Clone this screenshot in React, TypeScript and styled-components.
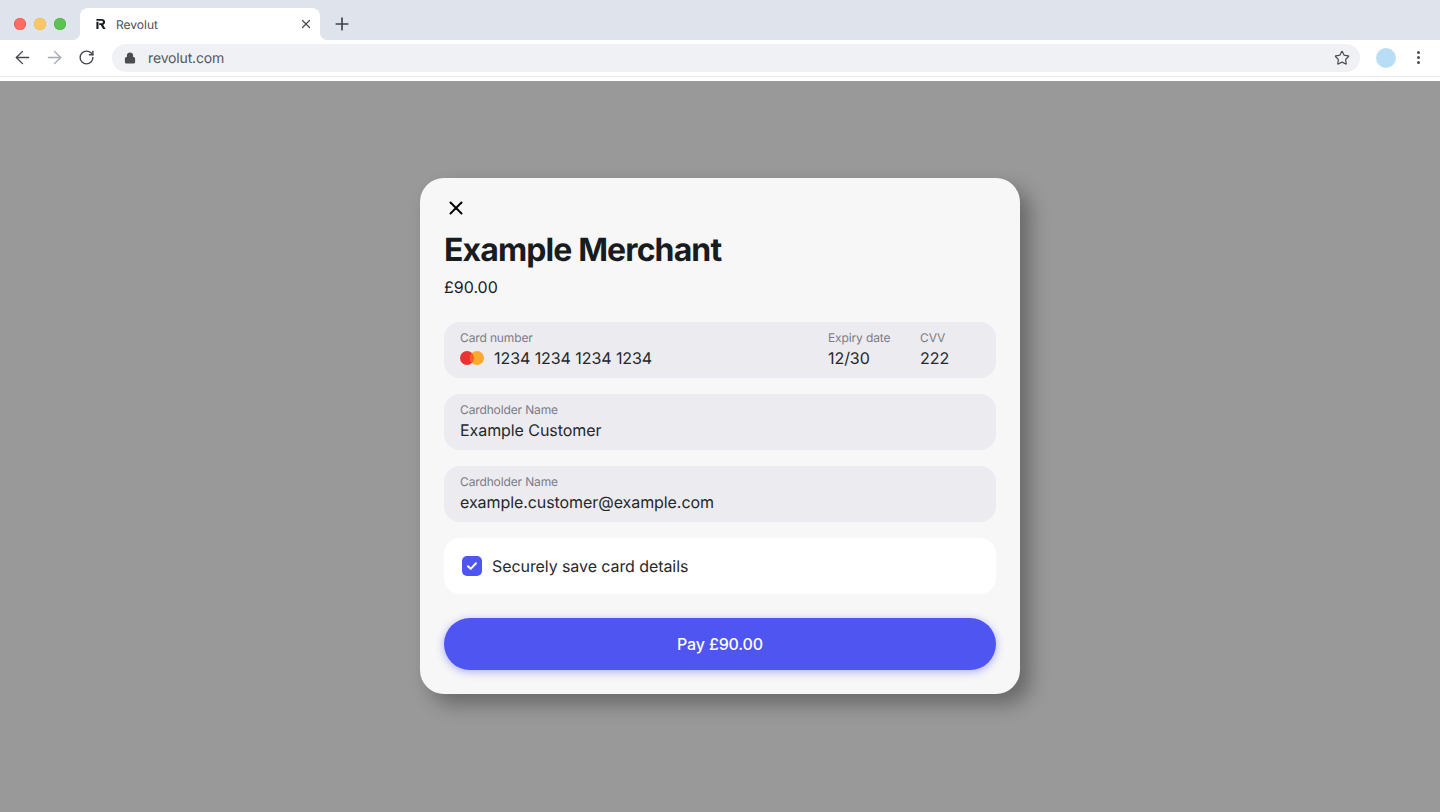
import styled, { createGlobalStyle } from 'styled-components';
import { ArrowLeft, ArrowRight, Lock, Plus, RotateCw, Star, X } from 'lucide-react';

const GlobalStyle = createGlobalStyle`
  html, body {
    margin: 0;
    padding: 0;
    height: 100%;
  }

  body {
    font-family: Inter, "Liberation Sans", sans-serif;
    text-rendering: geometricPrecision;
    background: #999;
    color: #191c1f;
    overflow: hidden;
  }

  * {
    box-sizing: border-box;
  }
`;

const Page = styled.div`
  display: flex;
  flex-direction: column;
  width: 1440px;
  height: 812px;
`;

const TabStrip = styled.div`
  display: flex;
  align-items: flex-end;
  height: 40px;
  padding-left: 14px;
  background: #dfe3ec;
`;

const TrafficLights = styled.div`
  display: flex;
  gap: 8px;
  align-self: flex-start;
  width: 66px;
  margin-top: 18px;
`;

const Light = styled.span<{ $color: string; $edge: string }>`
  width: 12px;
  height: 12px;
  border-radius: 50%;
  background: ${p => p.$color};
  box-shadow: inset 0 0 0 0.5px ${p => p.$edge};
`;

const Tab = styled.div`
  position: relative;
  display: flex;
  align-items: center;
  width: 240px;
  height: 32px;
  padding: 0 7px 0 16px;
  border-radius: 8px 8px 0 0;
  background: #fff;
  font-size: 12px;
  color: #4a4d52;

  &::before,
  &::after {
    content: '';
    position: absolute;
    bottom: 0;
    width: 8px;
    height: 8px;
  }

  &::before {
    left: -8px;
    background: radial-gradient(circle at 0 0, transparent 8px, #fff 8.5px);
  }

  &::after {
    right: -8px;
    background: radial-gradient(circle at 100% 0, transparent 8px, #fff 8.5px);
  }
`;

const TabTitle = styled.span`
  flex: 1;
  margin-left: 10px;
`;

const TabClose = styled.span`
  display: flex;
  color: #4a4d52;
`;

const NewTab = styled.span`
  display: flex;
  align-self: flex-start;
  margin-top: 14px;
  margin-left: 12px;
  color: #3f4347;
`;

const Toolbar = styled.div`
  display: flex;
  align-items: center;
  height: 37px;
  padding: 0 20px 1px 6px;
  background: #fff;
  border-bottom: 1px solid #e8e9ec;
`;

const NavButton = styled.span<{ $dim?: boolean }>`
  display: flex;
  justify-content: center;
  width: 32px;
  color: ${p => (p.$dim ? '#a4a8b0' : '#45484d')};
`;

const AddressBar = styled.div`
  display: flex;
  align-items: center;
  flex: 1;
  height: 28px;
  margin-left: 10px;
  padding: 0 10px 0 12px;
  border-radius: 14px;
  background: #eff1f5;
  font-size: 14px;
  color: #55585d;
`;

const LockIcon = styled.span`
  display: flex;
  margin-right: 12px;
  color: #4a4d52;
`;

const Url = styled.span`
  flex: 1;
  padding-top: 1px;
  letter-spacing: -0.15px;
`;

const StarIcon = styled.span`
  display: flex;
  color: #4a4d52;
`;

const Avatar = styled.span`
  width: 20px;
  height: 20px;
  margin-left: 16px;
  border-radius: 50%;
  background: #b8def5;
`;

const MenuDots = styled.span`
  display: flex;
  flex-direction: column;
  gap: 2px;
  margin-left: 21px;

  i {
    width: 3px;
    height: 3px;
    border-radius: 50%;
    background: #4a4d52;
  }
`;

const ToolbarGap = styled.div`
  height: 4px;
  background: #fff;
`;

const Backdrop = styled.main`
  display: flex;
  justify-content: center;
  align-items: flex-start;
  flex: 1;
  padding-top: 97px;
  background: #999;
`;

const Modal = styled.section`
  display: flex;
  flex-direction: column;
  width: 600px;
  height: 516px;
  padding: 22px 24px 24px;
  border-radius: 24px;
  background: #f7f7f7;
  box-shadow: 10px 10px 20px rgba(0, 0, 0, 0.32);
`;

const CloseButton = styled.button`
  display: flex;
  align-items: center;
  justify-content: center;
  width: 24px;
  height: 16px;
  margin: 0;
  padding: 0;
  border: 0;
  background: none;
  color: #000;
`;

const Title = styled.h1`
  margin: 15px 0 0;
  font-size: 32px;
  font-weight: 700;
  line-height: 38px;
  letter-spacing: -0.88px;
  color: #191c1f;
`;

const Amount = styled.div`
  margin-top: 8px;
  margin-bottom: 25px;
  font-size: 16px;
  line-height: 20px;
  color: #191c1f;
`;

const FieldBox = styled.div`
  display: flex;
  height: 56px;
  margin-bottom: 16px;
  padding: 9px 16px 0;
  border-radius: 16px;
  background: #ebebf0;
`;

const Field = styled.div<{ $width?: number }>`
  display: flex;
  flex-direction: column;
  flex: ${p => (p.$width ? `0 0 ${p.$width}px` : '1')};
`;

const Label = styled.span`
  font-size: 12px;
  line-height: 13px;
  letter-spacing: -0.13px;
  color: #7c7c86;
`;

const Value = styled.span`
  display: flex;
  align-items: center;
  margin-top: 4px;
  font-size: 16px;
  line-height: 20px;
  letter-spacing: -0.07px;
  color: #25282b;
`;

const CardNumber = styled.span`
  margin-left: 10px;
`;

const SaveRow = styled.label`
  display: flex;
  align-items: center;
  height: 56px;
  margin-bottom: 24px;
  padding-left: 18px;
  border-radius: 16px;
  background: #fff;
  font-size: 16px;
  letter-spacing: -0.08px;
  color: #27292d;
`;

const CheckBox = styled.span`
  display: flex;
  align-items: center;
  justify-content: center;
  width: 20px;
  height: 20px;
  margin-right: 10px;
  border-radius: 5px;
  background: #4f55f1;
`;

const PayButton = styled.button`
  height: 52px;
  padding: 0;
  border: 0;
  border-radius: 26px;
  background: #4f55f1;
  box-shadow: 0 2px 8px rgba(79, 85, 241, 0.45);
  font-family: inherit;
  font-size: 16px;
  font-weight: 500;
  letter-spacing: -0.15px;
  color: #fff;
`;

const RevolutMark = () => (
  <svg width="10" height="10" viewBox="0 0 10 10">
    <path d="M.4 2.8h2.1V10H.4z" fill="#191c1f" />
    <path
      d="M.4 0h5.2c2.1 0 3.5 1.2 3.5 3 0 1.4-.8 2.4-2 2.8L9.6 10H7.1L4.7 6.1H3.2V4.3h2.2c.9 0 1.5-.5 1.5-1.3s-.6-1.3-1.5-1.3H.4z"
      fill="#191c1f"
    />
  </svg>
);

const CardLogo = () => (
  <svg width="24" height="14" viewBox="0 0 24 14">
    <circle cx="7" cy="7" r="7" fill="#eb3333" />
    <circle cx="17" cy="7" r="7" fill="#ffa92e" />
    <path d="M12 2.1a7 7 0 0 1 0 9.8 7 7 0 0 1 0-9.8z" fill="#f4601f" />
  </svg>
);

export default function App() {
  return (
    <Page>
      <GlobalStyle />
      <TabStrip>
        <TrafficLights>
          <Light $color="#ff6a63" $edge="#e8564f" />
          <Light $color="#fdc763" $edge="#e5ae4c" />
          <Light $color="#5cc351" $edge="#4cab43" />
        </TrafficLights>
        <Tab>
          <RevolutMark />
          <TabTitle>Revolut</TabTitle>
          <TabClose>
            <X size={14} strokeWidth={2.2} />
          </TabClose>
        </Tab>
        <NewTab>
          <Plus size={20} strokeWidth={2} />
        </NewTab>
      </TabStrip>
      <Toolbar>
        <NavButton>
          <ArrowLeft size={21} strokeWidth={1.6} />
        </NavButton>
        <NavButton $dim>
          <ArrowRight size={21} strokeWidth={1.6} />
        </NavButton>
        <NavButton>
          <RotateCw size={17} strokeWidth={2} />
        </NavButton>
        <AddressBar>
          <LockIcon>
            <Lock size={12} strokeWidth={2.4} fill="currentColor" />
          </LockIcon>
          <Url>revolut.com</Url>
          <StarIcon>
            <Star size={16} strokeWidth={1.8} />
          </StarIcon>
        </AddressBar>
        <Avatar />
        <MenuDots>
          <i />
          <i />
          <i />
        </MenuDots>
      </Toolbar>
      <ToolbarGap />
      <Backdrop>
        <Modal>
          <CloseButton aria-label="Close">
            <X size={22} strokeWidth={2.2} />
          </CloseButton>
          <Title>Example Merchant</Title>
          <Amount>£90.00</Amount>
          <FieldBox>
            <Field>
              <Label>Card number</Label>
              <Value>
                <CardLogo />
                <CardNumber>1234 1234 1234 1234</CardNumber>
              </Value>
            </Field>
            <Field $width={92}>
              <Label>Expiry date</Label>
              <Value>12/30</Value>
            </Field>
            <Field $width={60}>
              <Label>CVV</Label>
              <Value>222</Value>
            </Field>
          </FieldBox>
          <FieldBox>
            <Field>
              <Label>Cardholder Name</Label>
              <Value>Example Customer</Value>
            </Field>
          </FieldBox>
          <FieldBox>
            <Field>
              <Label>Cardholder Name</Label>
              <Value>example.customer@example.com</Value>
            </Field>
          </FieldBox>
          <SaveRow>
            <CheckBox>
              <svg width="14" height="14" viewBox="0 0 14 14">
                <path d="M3 7.3l2.7 2.6 5.3-5.6" fill="none" stroke="#fff" strokeWidth="2" strokeLinecap="round" strokeLinejoin="round" />
              </svg>
            </CheckBox>
            Securely save card details
          </SaveRow>
          <PayButton>Pay £90.00</PayButton>
        </Modal>
      </Backdrop>
    </Page>
  );
}
